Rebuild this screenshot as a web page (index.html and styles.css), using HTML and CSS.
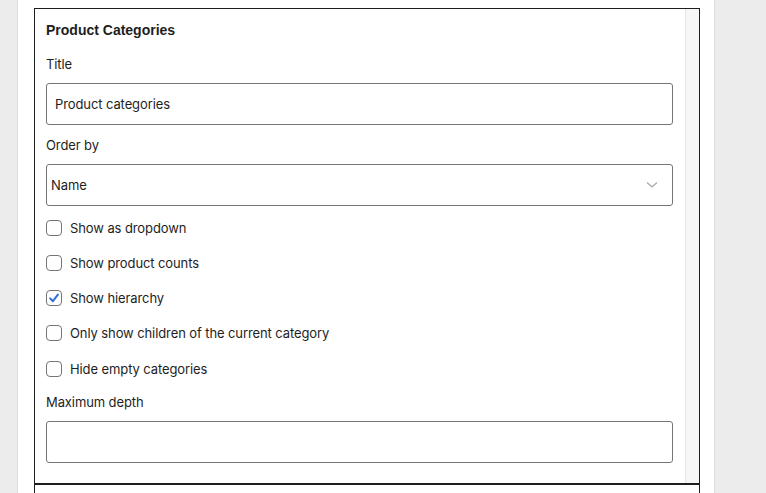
FILE: index.html
```html
<!DOCTYPE html>
<html>
<head>
<meta charset="utf-8">
<link rel="stylesheet" href="styles.css">
</head>
<body>
<div class="page">
  <div class="side side-left"></div>
  <div class="main">
    <div class="card">
      <div class="card-body">
        <h2 class="card-title">Product Categories</h2>
        <div class="field field-title">
          <label class="field-label">Title</label>
          <div class="input"><span class="input-text">Product categories</span></div>
        </div>
        <div class="field field-order">
          <label class="field-label">Order by</label>
          <div class="input select">
            <span class="select-text">Name</span>
            <svg class="chevron" width="12" height="8" viewBox="0 0 12 8"><path d="M1 1.5 L6 6 L11 1.5" fill="none" stroke="#a7a7a7" stroke-width="1.2"/></svg>
          </div>
        </div>
        <div class="checks">
          <div class="check-row"><span class="box"></span><span class="check-label">Show as dropdown</span></div>
          <div class="check-row"><span class="box"></span><span class="check-label">Show product counts</span></div>
          <div class="check-row"><span class="box checked"><svg width="14" height="14" viewBox="0 0 14 14"><path d="M3.2 7.4 L5.9 10.2 L10.9 3.6" fill="none" stroke="#2f6ed3" stroke-width="2" stroke-linecap="round" stroke-linejoin="round"/></svg></span><span class="check-label">Show hierarchy</span></div>
          <div class="check-row"><span class="box"></span><span class="check-label">Only show children of the current category</span></div>
          <div class="check-row"><span class="box"></span><span class="check-label">Hide empty categories</span></div>
        </div>
        <div class="field field-depth">
          <label class="field-label">Maximum depth</label>
          <div class="input"></div>
        </div>
      </div>
      <div class="scroll-track"></div>
    </div>
    <div class="card-next"></div>
  </div>
  <div class="side side-right"></div>
</div>
</body>
</html>
```

FILE: styles.css
```css
html, body {
  margin: 0;
  padding: 0;
  height: 100%;
  overflow: hidden;
}
body {
  background: #ececec;
  font-family: Inter, "Liberation Sans", Arial, sans-serif;
  color: #1e1e1e;
}
.page {
  display: flex;
  height: 493px;
}
.side-left {
  width: 17px;
  flex: none;
}
.side-right {
  flex: 1;
}
.main {
  width: 698px;
  flex: none;
  background: #fff;
  border-left: 1px solid #dedede;
  border-right: 1px solid #dedede;
  padding: 8px 0 0 16px;
  box-sizing: border-box;
}
.card {
  width: 666px;
  box-sizing: border-box;
  border: 1px solid #1e1e1e;
  border-bottom: 2px solid #1e1e1e;
  display: flex;
}
.card-body {
  flex: 1;
  padding: 11px 12px 20px 11px;
}
.scroll-track {
  width: 13px;
  flex: none;
  background: #f7f7f7;
  border-left: 1px solid #e6e6e6;
}
.card-next {
  width: 666px;
  height: 20px;
  box-sizing: border-box;
  border-left: 1px solid #1e1e1e;
  border-right: 1px solid #1e1e1e;
}
.card-title {
  margin: 0;
  font-family: "Liberation Sans", Arial, sans-serif;
  font-size: 14px;
  font-weight: 700;
  line-height: 20px;
}
.field-label {
  display: block;
  font-size: 13px;
  line-height: 18px;
  letter-spacing: -0.1px;
  margin-bottom: 10px;
}
.field-title {
  margin-top: 15px;
}
.field-order {
  margin-top: 11px;
}
.field-depth {
  margin-top: 6px;
}
.input {
  height: 42px;
  box-sizing: border-box;
  border: 1px solid #757575;
  border-radius: 3px;
  display: flex;
  align-items: center;
  padding: 0 8px;
  font-size: 13px;
  letter-spacing: -0.1px;
}
.select {
  padding: 0 14px 0 4px;
  justify-content: space-between;
}
.chevron {
  display: block;
}
.checks {
  padding-top: 4px;
  padding-bottom: 1px;
}
.check-row {
  height: 35.25px;
  display: flex;
  align-items: center;
}
.box {
  width: 16px;
  height: 16px;
  box-sizing: border-box;
  border: 1px solid #757575;
  border-radius: 4px;
  flex: none;
  display: flex;
  align-items: center;
  justify-content: center;
  background: #fff;
}
.check-label {
  margin-left: 8px;
  font-size: 13px;
  line-height: 18px;
  letter-spacing: -0.1px;
}
```
